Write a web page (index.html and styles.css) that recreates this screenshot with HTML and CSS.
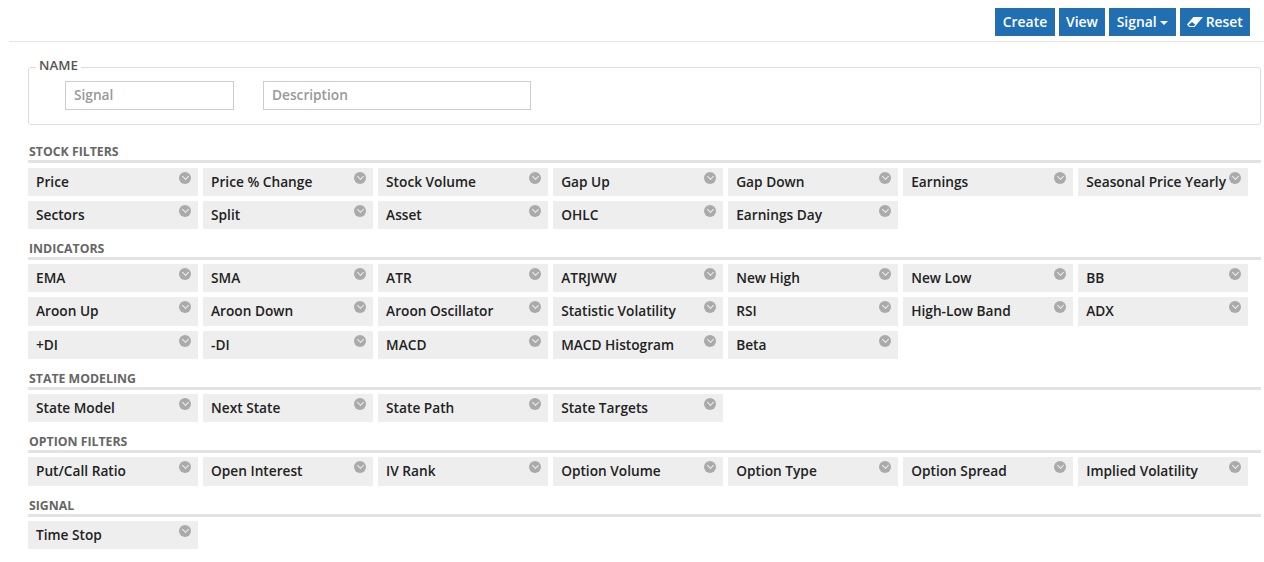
FILE: index.html
```html
<!DOCTYPE html>
<html lang="en">
<head>
  <meta charset="UTF-8" />
  <title>Signal</title>
  <link rel="stylesheet" href="styles.css">
</head>
<body>
  <div class="toolbar">
    <button class="btn btn-create">Create</button>
    <button class="btn btn-view">View</button>
    <button class="btn btn-signal">Signal <span class="caret"></span></button>
    <button class="btn btn-reset">
      <svg class="eraser" viewBox="0 0 16 10"><path d="M0 7.6 L6.4 0 H16 L9.6 7.6 L7.6 10 H2.2 Z M1.7 7.7 L3 8.9 H7 L8.2 7.5 L5 5 Z" fill="#fff" fill-rule="evenodd"/></svg>
      Reset
    </button>
  </div>

  <main class="content">
    <fieldset class="name-box">
      <legend>NAME</legend>
      <input class="field field-signal" type="text" placeholder="Signal" />
      <input class="field field-desc" type="text" placeholder="Description" />
    </fieldset>

    <h4 class="group-title">STOCK FILTERS</h4>
    <div class="tiles">
      <div class="tile">Price<span class="chev"></span></div>
      <div class="tile">Price % Change<span class="chev"></span></div>
      <div class="tile">Stock Volume<span class="chev"></span></div>
      <div class="tile">Gap Up<span class="chev"></span></div>
      <div class="tile">Gap Down<span class="chev"></span></div>
      <div class="tile">Earnings<span class="chev"></span></div>
      <div class="tile">Seasonal Price Yearly<span class="chev"></span></div>
      <div class="tile">Sectors<span class="chev"></span></div>
      <div class="tile">Split<span class="chev"></span></div>
      <div class="tile">Asset<span class="chev"></span></div>
      <div class="tile">OHLC<span class="chev"></span></div>
      <div class="tile">Earnings Day<span class="chev"></span></div>
    </div>

    <h4 class="group-title">INDICATORS</h4>
    <div class="tiles">
      <div class="tile">EMA<span class="chev"></span></div>
      <div class="tile">SMA<span class="chev"></span></div>
      <div class="tile">ATR<span class="chev"></span></div>
      <div class="tile">ATRJWW<span class="chev"></span></div>
      <div class="tile">New High<span class="chev"></span></div>
      <div class="tile">New Low<span class="chev"></span></div>
      <div class="tile">BB<span class="chev"></span></div>
      <div class="tile">Aroon Up<span class="chev"></span></div>
      <div class="tile">Aroon Down<span class="chev"></span></div>
      <div class="tile">Aroon Oscillator<span class="chev"></span></div>
      <div class="tile">Statistic Volatility<span class="chev"></span></div>
      <div class="tile">RSI<span class="chev"></span></div>
      <div class="tile">High-Low Band<span class="chev"></span></div>
      <div class="tile">ADX<span class="chev"></span></div>
      <div class="tile">+DI<span class="chev"></span></div>
      <div class="tile">-DI<span class="chev"></span></div>
      <div class="tile">MACD<span class="chev"></span></div>
      <div class="tile">MACD Histogram<span class="chev"></span></div>
      <div class="tile">Beta<span class="chev"></span></div>
    </div>

    <h4 class="group-title">STATE MODELING</h4>
    <div class="tiles">
      <div class="tile">State Model<span class="chev"></span></div>
      <div class="tile">Next State<span class="chev"></span></div>
      <div class="tile">State Path<span class="chev"></span></div>
      <div class="tile">State Targets<span class="chev"></span></div>
    </div>

    <h4 class="group-title">OPTION FILTERS</h4>
    <div class="tiles">
      <div class="tile">Put/Call Ratio<span class="chev"></span></div>
      <div class="tile">Open Interest<span class="chev"></span></div>
      <div class="tile">IV Rank<span class="chev"></span></div>
      <div class="tile">Option Volume<span class="chev"></span></div>
      <div class="tile">Option Type<span class="chev"></span></div>
      <div class="tile">Option Spread<span class="chev"></span></div>
      <div class="tile">Implied Volatility<span class="chev"></span></div>
    </div>

    <h4 class="group-title">SIGNAL</h4>
    <div class="tiles">
      <div class="tile">Time Stop<span class="chev"></span></div>
    </div>
  </main>
</body>
</html>
```

FILE: styles.css
```css
/* Base */
body {
  margin: 0;
  font-family: "Open Sans", "Liberation Sans", sans-serif;
  font-size: 13.7px;
  color: #333;
  background: #fff;
}

/* Top toolbar */
.toolbar {
  display: flex;
  justify-content: flex-end;
  gap: 4px;
  height: 42px;
  margin-left: 9px;
  padding: 8px 14px 0 0;
  box-sizing: border-box;
  border-bottom: 1px solid #e5e5e5;
}
.btn {
  height: 28px;
  padding: 0 0 2px;
  border: 1px solid #2e6da4;
  background: #1f6fb2;
  color: #fff;
  font-family: inherit;
  font-size: 13.9px;
  font-weight: 600;
  white-space: nowrap;
}
.btn-create { width: 60px; }
.btn-view { width: 46px; }
.btn-signal { width: 67px; }
.btn-reset { width: 70px; }
.caret {
  display: inline-block;
  width: 0;
  height: 0;
  vertical-align: middle;
  border-top: 4px solid #fff;
  border-left: 4px solid transparent;
  border-right: 4px solid transparent;
}
.eraser {
  width: 16px;
  height: 10px;
  margin-right: -1px;
}

/* Page body */
.content {
  padding: 0 3px 0 28px;
}

/* Name box */
.name-box {
  height: 68px;
  margin: 15px 0 0;
  padding: 0 0 0 36px;
  box-sizing: border-box;
  border: 1px solid #ddd;
  border-radius: 3px;
  display: flex;
  align-items: flex-start;
}
.name-box legend {
  margin-left: -29px;
  padding: 0 3px 4px;
  font-size: 13.3px;
  font-weight: 600;
  color: #555;
  line-height: 17px;
}
.field {
  height: 29px;
  margin-top: 3px;
  padding: 0 7px 2px 8px;
  box-sizing: border-box;
  border: 1px solid #ccc;
  font-family: inherit;
  font-size: 13.7px;
  font-weight: 600;
}
.field::placeholder {
  color: #999;
}
.field-signal {
  width: 169px;
  margin-right: 29px;
}
.field-desc {
  width: 268px;
}

/* Filter groups */
.group-title {
  margin: 11px 0 4px;
  padding-left: 1px;
  border-bottom: 3px solid #e3e3e3;
  font-size: 12.3px;
  font-weight: 700;
  line-height: 17px;
  color: #666;
}
.name-box + .group-title {
  margin: 18px 0 4.5px;
}
.tiles {
  display: grid;
  grid-template-columns: repeat(7, 170.05px);
  gap: 5px;
}
.tile {
  position: relative;
  height: 28.3px;
  padding-left: 8px;
  background: #eee;
  font-weight: 600;
  line-height: 28px;
  color: #222;
  white-space: nowrap;
}
.chev {
  position: absolute;
  top: 4px;
  right: 7px;
  width: 12px;
  height: 12px;
  border-radius: 50%;
  background: #aaa;
}
.chev::after {
  content: "";
  position: absolute;
  left: 3.5px;
  top: 2px;
  width: 4px;
  height: 4px;
  border-right: 1.5px solid #eee;
  border-bottom: 1.5px solid #eee;
  transform: rotate(45deg);
}
```
